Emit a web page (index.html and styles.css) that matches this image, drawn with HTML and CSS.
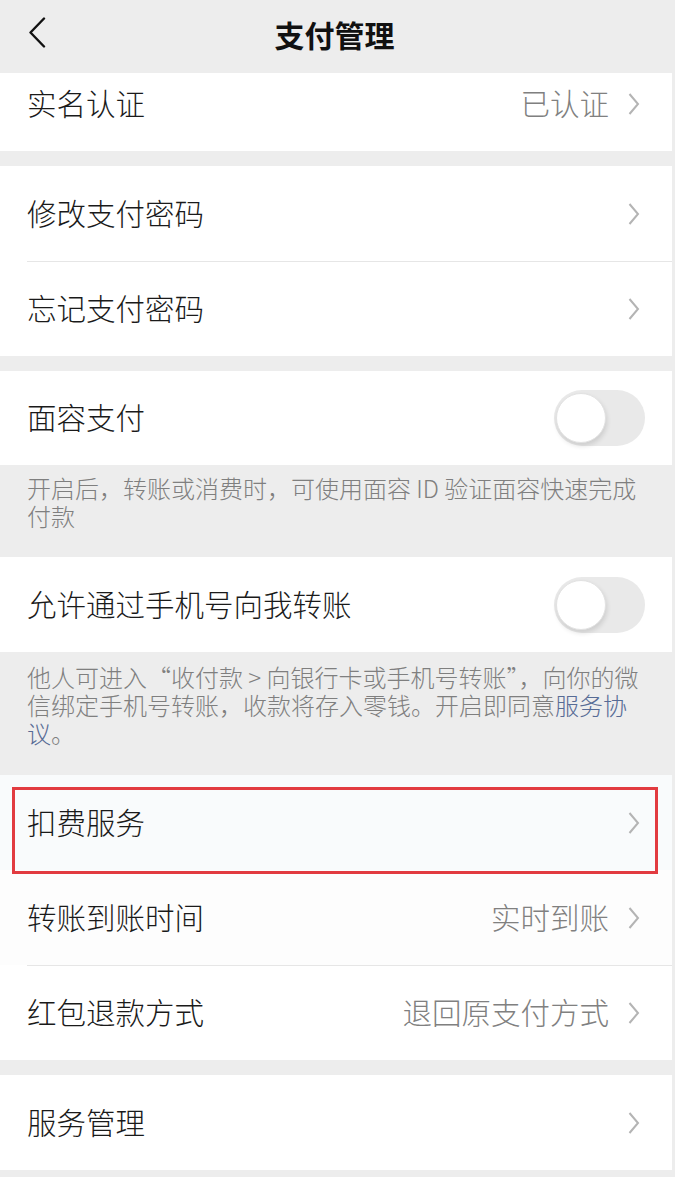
FILE: index.html
```html
<!DOCTYPE html>
<html lang="zh-CN">
<head>
<meta charset="utf-8">
<title>支付管理</title>
<link rel="stylesheet" href="styles.css">
</head>
<body>
<div class="page">
  <header class="nav">
    <span class="back">
      <svg width="18" height="31" viewBox="0 0 18 31"><polyline points="16,1.5 2.5,15.5 16,29.5" fill="none" stroke="#111" stroke-width="2.4" stroke-linecap="round" stroke-linejoin="round"/></svg>
    </span>
    <h1 class="title">支付管理</h1>
  </header>

  <section class="group">
    <div class="row cut">
      <span class="label">实名认证</span>
      <span class="value">已认证</span>
      <svg class="chev" width="12" height="24" viewBox="0 0 12 24"><polyline points="1.5,2 10,12 1.5,22" fill="none" stroke="#b4b4b4" stroke-width="2"/></svg>
    </div>
  </section>

  <section class="group">
    <div class="row">
      <span class="label">修改支付密码</span>
      <svg class="chev" width="12" height="24" viewBox="0 0 12 24"><polyline points="1.5,2 10,12 1.5,22" fill="none" stroke="#b4b4b4" stroke-width="2"/></svg>
    </div>
    <div class="row sep">
      <span class="label">忘记支付密码</span>
      <svg class="chev" width="12" height="24" viewBox="0 0 12 24"><polyline points="1.5,2 10,12 1.5,22" fill="none" stroke="#b4b4b4" stroke-width="2"/></svg>
    </div>
  </section>

  <section class="group attached">
    <div class="row switch-row short">
      <span class="label">面容支付</span>
      <span class="switch"><span class="knob"></span></span>
    </div>
  </section>
  <p class="tip">开启后，转账或消费时，可使用面容 ID 验证面容快速完成<br>付款</p>

  <section class="group attached">
    <div class="row switch-row">
      <span class="label">允许通过手机号向我转账</span>
      <span class="switch"><span class="knob"></span></span>
    </div>
  </section>
  <p class="tip tall">他人可进入“收付款 &gt; 向银行卡或手机号转账”，向你的微<br>信绑定手机号转账，收款将存入零钱。开启即同意<span class="link">服务协<br>议</span>。</p>

  <section class="group marked">
    <div class="row hl">
      <span class="label">扣费服务</span>
      <svg class="chev" width="12" height="24" viewBox="0 0 12 24"><polyline points="1.5,2 10,12 1.5,22" fill="none" stroke="#b4b4b4" stroke-width="2"/></svg>
    </div>
    <div class="row soft">
      <span class="label">转账到账时间</span>
      <span class="value">实时到账</span>
      <svg class="chev" width="12" height="24" viewBox="0 0 12 24"><polyline points="1.5,2 10,12 1.5,22" fill="none" stroke="#b4b4b4" stroke-width="2"/></svg>
    </div>
    <div class="row sep">
      <span class="label">红包退款方式</span>
      <span class="value">退回原支付方式</span>
      <svg class="chev" width="12" height="24" viewBox="0 0 12 24"><polyline points="1.5,2 10,12 1.5,22" fill="none" stroke="#b4b4b4" stroke-width="2"/></svg>
    </div>
    <div class="redbox"></div>
  </section>

  <section class="group">
    <div class="row">
      <span class="label">服务管理</span>
      <svg class="chev" width="12" height="24" viewBox="0 0 12 24"><polyline points="1.5,2 10,12 1.5,22" fill="none" stroke="#b4b4b4" stroke-width="2"/></svg>
    </div>
  </section>
</div>
</body>
</html>
```

FILE: styles.css
```css
* {
  box-sizing: border-box;
}

html, body {
  margin: 0;
  padding: 0;
  background: #ededed;
}

body {
  font-family: "Noto Sans CJK SC", "Noto Sans", sans-serif;
  color: #191919;
}

.page {
  width: 675px;
  min-height: 1177px;
  background: #ededed;
  overflow: hidden;
}

.nav {
  height: 73px;
  display: flex;
  align-items: center;
  justify-content: center;
  position: relative;
  background: #ededed;
}

.back {
  position: absolute;
  left: 28px;
  top: 17px;
  display: flex;
}

.title {
  margin: 0;
  font-size: 30px;
  font-weight: 700;
  color: #111;
  line-height: 1;
  transform: translate(-3px, -3px);
}

.group {
  background: #fff;
  margin-right: 3px;
  margin-bottom: 15px;
}

.group.attached {
  margin-bottom: 0;
}

.row {
  height: 95px;
  display: flex;
  align-items: center;
  padding: 0 32px 0 27px;
  position: relative;
}

.row.short {
  height: 94px;
}

.row.cut {
  height: 78px;
  padding-bottom: 17px;
}

.row.sep::before {
  content: "";
  position: absolute;
  left: 27px;
  right: 0;
  top: 0;
  height: 1px;
  background: #e6e6e6;
}

.label {
  flex: 1;
  font-size: 29.5px;
  font-weight: 300;
  line-height: 1;
  color: #1a1a1a;
  transform: translateY(-1px);
}

.value {
  font-size: 29.5px;
  font-weight: 300;
  line-height: 1;
  color: #808080;
  margin-right: 19px;
  transform: translateY(-1px);
}

.chev {
  display: block;
  flex: none;
}

.switch-row {
  padding-right: 27px;
}

.switch {
  width: 91px;
  height: 56px;
  border-radius: 28px;
  background: #e9e9e9;
  position: relative;
  flex: none;
}

.knob {
  position: absolute;
  left: 2px;
  top: 3px;
  width: 50px;
  height: 50px;
  border-radius: 50%;
  background: #fff;
  border: 1px solid #e2e2e2;
  box-shadow: 1px 3px 5px rgba(0, 0, 0, 0.12);
}

.tip {
  margin: 0;
  padding: 9px 12px 27px 27px;
  font-size: 24px;
  font-weight: 300;
  line-height: 28px;
  color: #7f7f7f;
}

.tip.tall {
  padding-top: 11px;
  padding-bottom: 28px;
}

.link {
  color: #576b95;
}

.marked {
  position: relative;
}

.row.hl {
  background: #f9fbfc;
}

.row.soft {
  background: #fdfdfd;
}

.redbox {
  position: absolute;
  left: 12px;
  top: 12px;
  width: 646px;
  height: 87px;
  border: 3px solid #e23b40;
  pointer-events: none;
}
```
